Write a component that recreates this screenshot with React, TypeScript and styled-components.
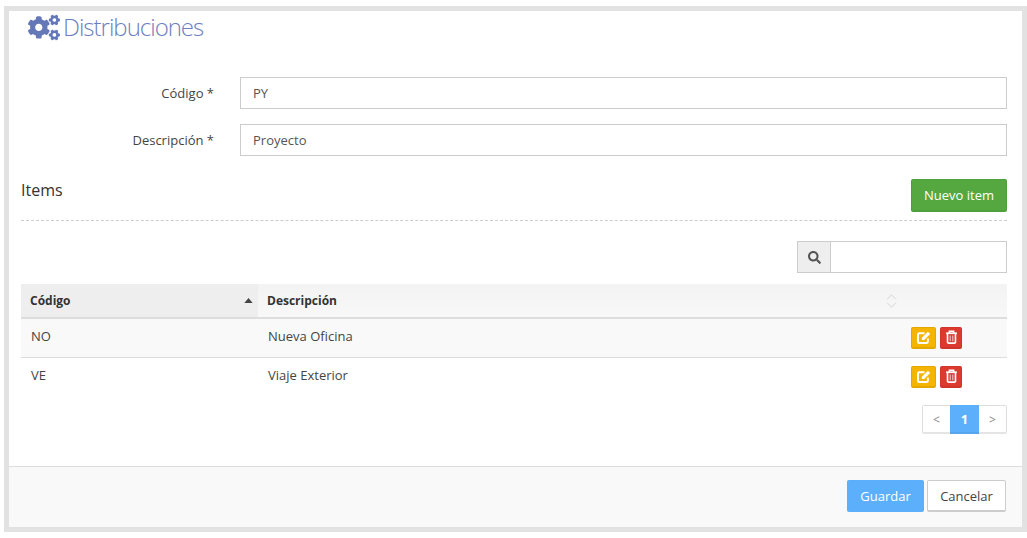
import React from "react";
import styled, { createGlobalStyle } from "styled-components";
import { FaCogs, FaSearch } from "react-icons/fa";

const Global = createGlobalStyle`
  html, body { margin: 0; padding: 0; background: #fff; }
  body { font-family: "Open Sans", "Liberation Sans", sans-serif; font-size: 13px; color: #333; }
  * { box-sizing: border-box; }
`;

const Page = styled.div`
  width: 1027px;
  height: 538px;
  padding: 6px 0 6px 4px;
`;
const Panel = styled.div`
  height: 526px;
  border: 5px solid #e2e2e2;
  background: #fff;
  display: flex;
  flex-direction: column;
`;
const Body = styled.div`
  flex: 1;
  padding: 0 15px 0 12px;
`;
const TitleRow = styled.div`
  height: 66px;
  display: flex;
  align-items: flex-start;
  gap: 3px;
  padding: 2px 0 0 7px;
  color: #6d7fc0;
  svg { width: 32px; height: 27px; margin-top: 1px; color: #6478b8; }
`;
const Title = styled.h1`
  margin: 0;
  font-size: 24px;
  font-weight: 300;
  line-height: 28px;
  letter-spacing: -1px;
`;
const FormRow = styled.div`
  display: grid;
  grid-template-columns: 193px 1fr;
  column-gap: 26px;
  align-items: center;
  margin-bottom: 15px;
`;
const Label = styled.label`
  text-align: right;
  font-size: 13px;
  color: #444;
`;
const TextBox = styled.div`
  height: 32px;
  border: 1px solid #ccc;
  padding: 0 12px;
  display: flex;
  align-items: center;
  color: #555;
  font-size: 13px;
`;
const Section = styled.div`
  height: 42px;
  margin: 23px 0 0 0;
  display: flex;
  justify-content: space-between;
  align-items: flex-start;
  border-bottom: 1px dashed #ccc;
`;
const SectionTitle = styled.h3`
  margin: 0;
  font-size: 16px;
  font-weight: 400;
  line-height: 22px;
  color: #333;
`;
const Button = styled.button<{ $kind: "green" | "blue" | "white" }>`
  font-family: inherit;
  font-size: 13px;
  height: ${p => (p.$kind === "green" ? "33px" : "32px")};
  border-radius: 2px;
  padding: 0 12px;
  border: 1px solid ${p => ({ green: "#4f9f3c", blue: "#5cb0fb", white: "#ccc" })[p.$kind]};
  border-bottom-width: 2px;
  background: ${p => ({ green: "#55a83f", blue: "#5cb0fb", white: "#fff" })[p.$kind]};
  color: ${p => (p.$kind === "white" ? "#444" : "#fff")};
`;
const SearchRow = styled.div`
  display: flex;
  justify-content: flex-end;
  margin-top: 20px;
`;
const Addon = styled.div`
  width: 33px;
  height: 32px;
  border: 1px solid #ccc;
  border-right: 0;
  background: #eee;
  display: flex;
  align-items: center;
  justify-content: center;
  color: #555;
  svg { width: 13px; height: 13px; }
`;
const SearchBox = styled.div`
  width: 177px;
  height: 32px;
  border: 1px solid #ccc;
`;
const Table = styled.table`
  width: 100%;
  margin-top: 11px;
  border-collapse: collapse;
  table-layout: fixed;
  font-size: 13px;
`;
const Th = styled.th<{ $sorted?: boolean; $w?: string }>`
  width: ${p => p.$w || "auto"};
  height: 34px;
  padding: 0 9px;
  text-align: left;
  font-size: 12px;
  font-weight: 700;
  color: #333;
  position: relative;
  border-bottom: 2px solid #ddd;
  background: ${p => (p.$sorted ? "#eeeeee" : "linear-gradient(#f3f3f3, #f8f8f8)")};
`;
const SortUp = styled.svg`
  position: absolute;
  right: 5px;
  top: 14px;
`;
const SortBoth = styled.svg`
  position: absolute;
  right: 4px;
  top: 10px;
`;
const Row = styled.tr<{ $odd?: boolean }>`
  background: ${p => (p.$odd ? "#f9f9f9" : "#fff")};
  border-bottom: ${p => (p.$odd ? "1px solid #ddd" : "0")};
`;
const Td = styled.td`
  height: 39px;
  padding: 0 10px 4px;
  color: #444;
`;
const ActionCell = styled.td`
  height: 39px;
  padding: 0 10px;
`;
const Actions = styled.div`
  display: flex;
  gap: 4px;
`;
const IconButton = styled.div<{ $bg: string; $bd: string; $w: number }>`
  width: ${p => p.$w}px;
  height: 22px;
  border-radius: 2px;
  background: ${p => p.$bg};
  border: 1px solid ${p => p.$bd};
  border-bottom-width: 2px;
  display: flex;
  align-items: center;
  justify-content: center;
  color: #fff;
`;
const PagerRow = styled.div`
  display: flex;
  justify-content: flex-end;
  margin-top: 9px;
`;
const Pager = styled.div`
  display: flex;
  height: 29px;
  border: 1px solid #ddd;
  border-bottom: 2px solid #e4e4e4;
  border-radius: 2px;
`;
const PageItem = styled.div<{ $active?: boolean }>`
  width: ${p => (p.$active ? "29px" : "27px")};
  margin: ${p => (p.$active ? "-1px 0 -2px" : "0")};
  display: flex;
  align-items: center;
  justify-content: center;
  font-size: ${p => (p.$active ? "13px" : "12px")};
  font-weight: ${p => (p.$active ? 700 : 400)};
  background: ${p => (p.$active ? "#5cb0fb" : "#fff")};
  color: ${p => (p.$active ? "#fff" : "#888")};
  border-bottom: ${p => (p.$active ? "2px solid #55a6ee" : "0")};
`;
const Footer = styled.div`
  height: 61px;
  background: #f9f9f9;
  border-top: 1px solid #ddd;
  display: flex;
  justify-content: flex-end;
  align-items: flex-start;
  gap: 3px;
  padding: 13px 16px 0 0;
`;
const SaveButton = styled(Button)`
  width: 77px;
`;
const CancelButton = styled(Button)`
  width: 79px;
`;

const EditIcon = () => (
  <svg width="16" height="15" viewBox="0 0 14 14">
    <path d="M7.5 3H2.6A1.2 1.2 0 0 0 1.4 4.2V11A1.2 1.2 0 0 0 2.6 12.2H9.4A1.2 1.2 0 0 0 10.6 11V8" fill="none" stroke="currentColor" strokeWidth="1.8" />
    <path d="M5 7.2L10.6 1.6L12.8 3.8L7.2 9.4H5Z" fill="currentColor" />
  </svg>
);
const TrashIcon = () => (
  <svg width="11" height="14" viewBox="0 0 10 13">
    <path d="M3 3V1.2H7V3" fill="none" stroke="currentColor" strokeWidth="1.4" />
    <path d="M0 3H10" fill="none" stroke="currentColor" strokeWidth="1.6" />
    <path d="M1.3 3V11.2A.9 .9 0 0 0 2.2 12.2H7.8A.9 .9 0 0 0 8.7 11.2V3" fill="none" stroke="currentColor" strokeWidth="1.5" />
    <path d="M3.8 5V10.4M6.2 5V10.4" fill="none" stroke="currentColor" strokeWidth="1" opacity="0.7" />
  </svg>
);

const rows = [
  { c: "NO", d: "Nueva Oficina", odd: true },
  { c: "VE", d: "Viaje Exterior", odd: false },
];

export default function App() {
  return (
    <Page>
      <Global />
      <Panel>
        <Body>
          <TitleRow>
            <FaCogs />
            <Title>Distribuciones</Title>
          </TitleRow>
          <FormRow>
            <Label>Código *</Label>
            <TextBox>PY</TextBox>
          </FormRow>
          <FormRow>
            <Label>Descripción *</Label>
            <TextBox>Proyecto</TextBox>
          </FormRow>
          <Section>
            <SectionTitle>Items</SectionTitle>
            <Button $kind="green">Nuevo item</Button>
          </Section>
          <SearchRow>
            <Addon><FaSearch /></Addon>
            <SearchBox />
          </SearchRow>
          <Table>
            <thead>
              <tr>
                <Th $sorted $w="237px">
                  Código
                  <SortUp width="9" height="5" viewBox="0 0 10 6"><path d="M0 6L5 0L10 6Z" fill="#444" /></SortUp>
                </Th>
                <Th>
                  Descripción
                  <SortBoth width="11" height="14" viewBox="0 0 12 16">
                    <path d="M1 6L6 1L11 6M1 10L6 15L11 10" fill="none" stroke="#d0d0d0" />
                  </SortBoth>
                </Th>
                <Th $w="106px" />
              </tr>
            </thead>
            <tbody>
              {rows.map(r => (
                <Row key={r.c} $odd={r.odd}>
                  <Td>{r.c}</Td>
                  <Td>{r.d}</Td>
                  <ActionCell>
                    <Actions>
                      <IconButton $bg="#f5b400" $bd="#e3a800" $w={25}><EditIcon /></IconButton>
                      <IconButton $bg="#dc3a2f" $bd="#cf352b" $w={22}><TrashIcon /></IconButton>
                    </Actions>
                  </ActionCell>
                </Row>
              ))}
            </tbody>
          </Table>
          <PagerRow>
            <Pager>
              <PageItem>&lt;</PageItem>
              <PageItem $active>1</PageItem>
              <PageItem>&gt;</PageItem>
            </Pager>
          </PagerRow>
        </Body>
        <Footer>
          <SaveButton $kind="blue">Guardar</SaveButton>
          <CancelButton $kind="white">Cancelar</CancelButton>
        </Footer>
      </Panel>
    </Page>
  );
}
